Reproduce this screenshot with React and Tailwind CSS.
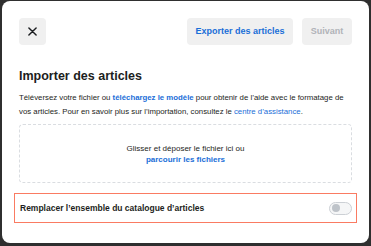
import React from "react";

const FONT = { fontFamily: '"Liberation Sans", Arial, sans-serif' };

export default function App() {
  return (
    <div className="w-[371px] h-[246px] bg-[#2f2f2f] px-[2px] pt-[1px] pb-[3px]" style={FONT}>
      <div className="h-full bg-white rounded-[8px] px-[17px] pt-[17px] flex flex-col">
        {/* header buttons */}
        <div className="flex items-center">
          <button className="w-[27px] h-[27px] rounded-[4px] bg-[#f0f0f0] flex items-center justify-center">
            <svg width="9" height="9" viewBox="0 0 10 10" fill="none">
              <path d="M1 1 L9 9 M9 1 L1 9" stroke="#1c1e21" strokeWidth="1.6" strokeLinecap="round" />
            </svg>
          </button>
          <div className="flex-1" />
          <button className="h-[27px] w-[106px] rounded-[4px] bg-[#f0f0f0] text-[9px] font-bold text-[#1a6ed8]">
            Exporter des articles
          </button>
          <button className="ml-[9px] h-[27px] w-[50px] rounded-[4px] bg-[#f0f0f0] text-[9px] font-bold text-[#b0b3b8]">
            Suivant
          </button>
        </div>

        <h1 className="mt-[22px] text-[12.5px] leading-[18px] font-bold text-[#1c1e21]">Importer des articles</h1>

        <p className="mt-[6px] text-[7.8px] leading-[14px] text-[#1c1e21]">
          Téléversez votre fichier ou <span className="font-bold text-[#1a6ed8]">téléchargez le modèle</span> pour
          obtenir de l’aide avec le formatage de vos articles. Pour en savoir plus sur l’importation, consultez le{" "}
          <span className="text-[#1a6ed8]">centre d’assistance</span>.
        </p>

        <div className="mt-[5px] h-[59px] border border-dashed border-[#dadde1] rounded-[4px] flex flex-col items-center justify-center text-[8px] leading-[11px]">
          <span className="text-[#1c1e21]">Glisser et déposer le fichier ici ou</span>
          <span className="font-bold text-[#1a6ed8]">parcourir les fichiers</span>
        </div>

        <div className="mt-[10px] -mx-[5px] h-[30px] border border-[#fa7b62] flex items-center justify-between pl-[5px] pr-[4px]">
          <span className="text-[8.5px] font-bold text-[#1c1e21]">Remplacer l’ensemble du catalogue d’articles</span>
          <div className="w-[23px] h-[13px] rounded-full border border-[#ccd0d5] bg-[#f5f6f7] flex items-center pl-[2px]">
            <div className="w-[8px] h-[8px] rounded-full bg-[#bec3c9]" />
          </div>
        </div>
      </div>
    </div>
  );
}
